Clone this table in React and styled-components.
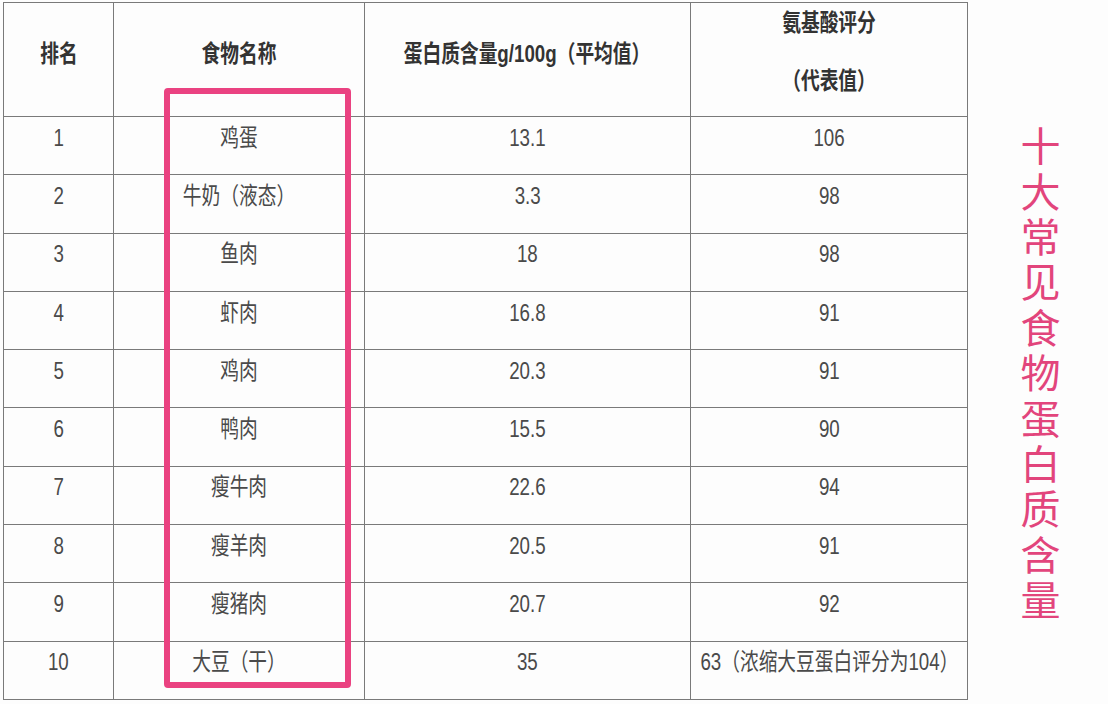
import React from 'react';
import styled, { createGlobalStyle } from 'styled-components';

const GlobalStyle = createGlobalStyle`
  html, body {
    margin: 0;
    padding: 0;
    background: #fdfdfd;
  }
  body {
    font-family: "Liberation Sans", "Noto Sans CJK SC", sans-serif;
  }
`;

const Page = styled.div`
  width: 1108px;
  height: 704px;
  display: flex;
  align-items: flex-start;
  padding: 2px 0 0 3px;
  box-sizing: border-box;
  overflow: hidden;
`;

const TableWrap = styled.div`
  position: relative;
  width: 964px;
  flex: none;
`;

const Table = styled.table`
  width: 964px;
  border-collapse: collapse;
  table-layout: fixed;
  color: #4a4a4a;
`;

const HeadCell = styled.th`
  height: 101px;
  border: 1.5px solid #7a7a7a;
  padding: 0 0 ${p => (p.$stack ? '0' : '12px')};
  color: #333;
  font-weight: 700;
  text-align: center;
  vertical-align: ${p => (p.$stack ? 'top' : 'middle')};
`;

const Cell = styled.td`
  height: 41.3px;
  border: 1.5px solid #7a7a7a;
  padding: 0 0 16px;
  text-align: center;
  vertical-align: middle;
`;

// the source is a squeezed screenshot, so glyphs are narrower than tall
const Text = styled.span`
  display: inline-block;
  font-family: "Liberation Sans", "Noto Sans CJK SC", sans-serif;
  font-size: 24px;
  line-height: ${p => (p.$stack ? '58px' : '26px')};
  margin: ${p => (p.$stack ? '-9px -40px 0' : '0 -40px')};
  white-space: nowrap;
  transform: scaleX(0.78);
`;

const Highlight = styled.div`
  position: absolute;
  left: 161px;
  top: 86px;
  width: 187px;
  height: 600px;
  box-sizing: border-box;
  border: 6px solid #ea4281;
  border-radius: 4px;
  pointer-events: none;
`;

const SideTitle = styled.div`
  flex: 1;
  display: flex;
  justify-content: center;
  padding-top: 124px;
  padding-left: 6px;
`;

const VerticalText = styled.div`
  writing-mode: vertical-rl;
  text-orientation: upright;
  font-family: "Noto Sans CJK SC", sans-serif;
  font-size: 40px;
  font-weight: 400;
  letter-spacing: 5.4px;
  line-height: 40px;
  color: #e2457c;
`;

const rows = [
  ['1', '鸡蛋', '13.1', '106'],
  ['2', '牛奶（液态）', '3.3', '98'],
  ['3', '鱼肉', '18', '98'],
  ['4', '虾肉', '16.8', '91'],
  ['5', '鸡肉', '20.3', '91'],
  ['6', '鸭肉', '15.5', '90'],
  ['7', '瘦牛肉', '22.6', '94'],
  ['8', '瘦羊肉', '20.5', '91'],
  ['9', '瘦猪肉', '20.7', '92'],
  ['10', '大豆（干）', '35', '63（浓缩大豆蛋白评分为104）'],
];

export default function App() {
  return (
    <Page>
      <GlobalStyle />
      <TableWrap>
        <Table>
          <colgroup>
            <col style={{ width: 110 }} />
            <col style={{ width: 251 }} />
            <col style={{ width: 326 }} />
            <col style={{ width: 277 }} />
          </colgroup>
          <thead>
            <tr>
              <HeadCell><Text>排名</Text></HeadCell>
              <HeadCell><Text>食物名称</Text></HeadCell>
              <HeadCell><Text>蛋白质含量g/100g（平均值）</Text></HeadCell>
              <HeadCell $stack><Text $stack>氨基酸评分<br />（代表值）</Text></HeadCell>
            </tr>
          </thead>
          <tbody>
            {rows.map(r => (
              <tr key={r[0]}>
                {r.map((v, i) => (
                  <Cell key={i}><Text>{v}</Text></Cell>
                ))}
              </tr>
            ))}
          </tbody>
        </Table>
        <Highlight />
      </TableWrap>
      <SideTitle>
        <VerticalText>十大常见食物蛋白质含量</VerticalText>
      </SideTitle>
    </Page>
  );
}
